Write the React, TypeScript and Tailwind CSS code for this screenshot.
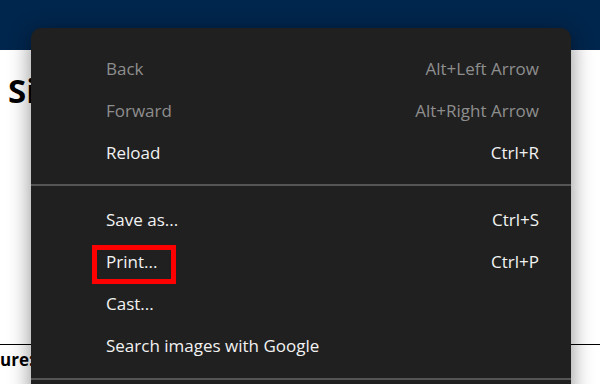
import React from "react";

type Item = { label: string; shortcut?: string; disabled?: boolean; highlight?: boolean };

const groups: Item[][] = [
  [
    { label: "Back", shortcut: "Alt+Left Arrow", disabled: true },
    { label: "Forward", shortcut: "Alt+Right Arrow", disabled: true },
    { label: "Reload", shortcut: "Ctrl+R" },
  ],
  [
    { label: "Save as...", shortcut: "Ctrl+S" },
    { label: "Print...", shortcut: "Ctrl+P", highlight: true },
    { label: "Cast..." },
    { label: "Search images with Google" },
  ],
];

function MenuRow({ item }: { item: Item }) {
  return (
    <div
      className={`relative flex h-[42px] items-center justify-between pl-[75px] pr-[32px] ${
        item.disabled ? "text-[#8e8e8e]" : "text-[#f2f2f2]"
      }`}
    >
      <span>{item.label}</span>
      {item.shortcut && <span>{item.shortcut}</span>}
      {/* red annotation box */}
      {item.highlight && (
        <span className="absolute left-[61px] top-[4px] h-[39px] w-[84px] border-[5px] border-[#ff0000]" />
      )}
    </div>
  );
}

export default function App() {
  return (
    <div className="relative h-[384px] w-[600px] overflow-hidden bg-white font-['Open_Sans','Noto_Sans',sans-serif]">
      {/* page behind the menu */}
      <div className="h-[50px] bg-[#00264d]" />
      <h1 className="ml-[8px] mt-[24px] text-[33px] font-bold leading-none text-black">Sign</h1>
      <div className="mt-[237px] border-t border-black" />
      <p className="mt-[6px] text-[17px] font-bold leading-none text-black">ure:</p>

      {/* context menu */}
      <div className="absolute left-[31px] top-[28px] w-[540px] rounded-t-[10px] bg-[#202020] pt-[20px] text-[17px] shadow-[0_4px_22px_rgba(0,0,0,0.45)]">
        {groups.map((group, gi) => (
          <div key={gi}>
            {gi > 0 && <div className="mb-[13px] mt-[10px] h-[2px] bg-[#555555]" />}
            {group.map((item) => (
              <MenuRow key={item.label} item={item} />
            ))}
          </div>
        ))}
        <div className="mb-[20px] mt-[11px] h-[2px] bg-[#555555]" />
      </div>
    </div>
  );
}
